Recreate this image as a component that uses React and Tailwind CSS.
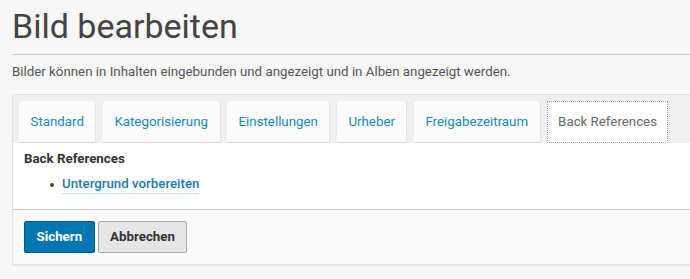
import React from "react";

const tabs = ["Standard", "Kategorisierung", "Einstellungen", "Urheber", "Freigabezeitraum"];

export default function App() {
  return (
    <div className="min-h-[279px] w-[690px] overflow-hidden bg-[#f7f7f7] pl-3 font-['Roboto',sans-serif] text-[#444]">
      <h1 className="pt-[6px] text-[34px] leading-[40px] font-normal text-[#444]">Bild bearbeiten</h1>
      <div className="mt-[8px] h-px bg-[#cccccc]" />
      <p className="mt-[7px] text-[13.3px] leading-[20px] text-[#555]">
        Bilder können in Inhalten eingebunden und angezeigt und in Alben angezeigt werden.
      </p>
      <div className="mt-[12px] w-[760px] rounded-[3px] border border-[#e2e2e2] bg-[#f0f0f0] shadow-[0_1px_2px_rgba(0,0,0,0.06)]">
        <div className="flex gap-[7.5px] pl-[6px] pt-[6px]">
          {tabs.map((t) => (
            <div
              key={t}
              className="flex h-[42px] items-center rounded-t-[3px] border-b border-[#d8d8d8] bg-[#fcfcfc] px-[11.5px] text-[13.3px] text-[#1a87c2] shadow-[1px_0_0_#e4e4e4]"
            >
              {t}
            </div>
          ))}
          <div className="flex h-[42px] items-center border border-dotted border-[#9a9a9a] bg-white px-[10px] text-[13.3px] text-[#666]">
            Back References
          </div>
        </div>
        <div className="bg-white pb-[15px] pl-[11px] pt-[7px]">
          <div className="text-[13.3px] font-bold leading-[18px] text-[#333]">Back References</div>
          <ul className="mt-[7px] pl-[26px] text-[13.3px] leading-[18px] text-[#333]">
            <li className="flex items-center">
              <span className="mr-[8px] h-[4px] w-[4px] rounded-full bg-[#444]" />
              <span className="border-b border-[#cfdde6] font-medium text-[#1a7ab8]">Untergrund vorbereiten</span>
            </li>
          </ul>
        </div>
        <div className="flex gap-[3px] border-t border-[#cccccc] bg-[#fafafa] pb-[11px] pl-[11px] pt-[11px]">
          <button className="h-[32px] rounded-[2px] border border-[#005b8a] bg-[#0077b3] px-[11.5px] text-[13.3px] font-bold text-white">
            Sichern
          </button>
          <button className="h-[32px] rounded-[2px] border border-[#aaaaaa] bg-[#e6e6e6] px-[11.5px] text-[13.3px] font-bold text-[#333]">
            Abbrechen
          </button>
        </div>
      </div>
    </div>
  );
}
